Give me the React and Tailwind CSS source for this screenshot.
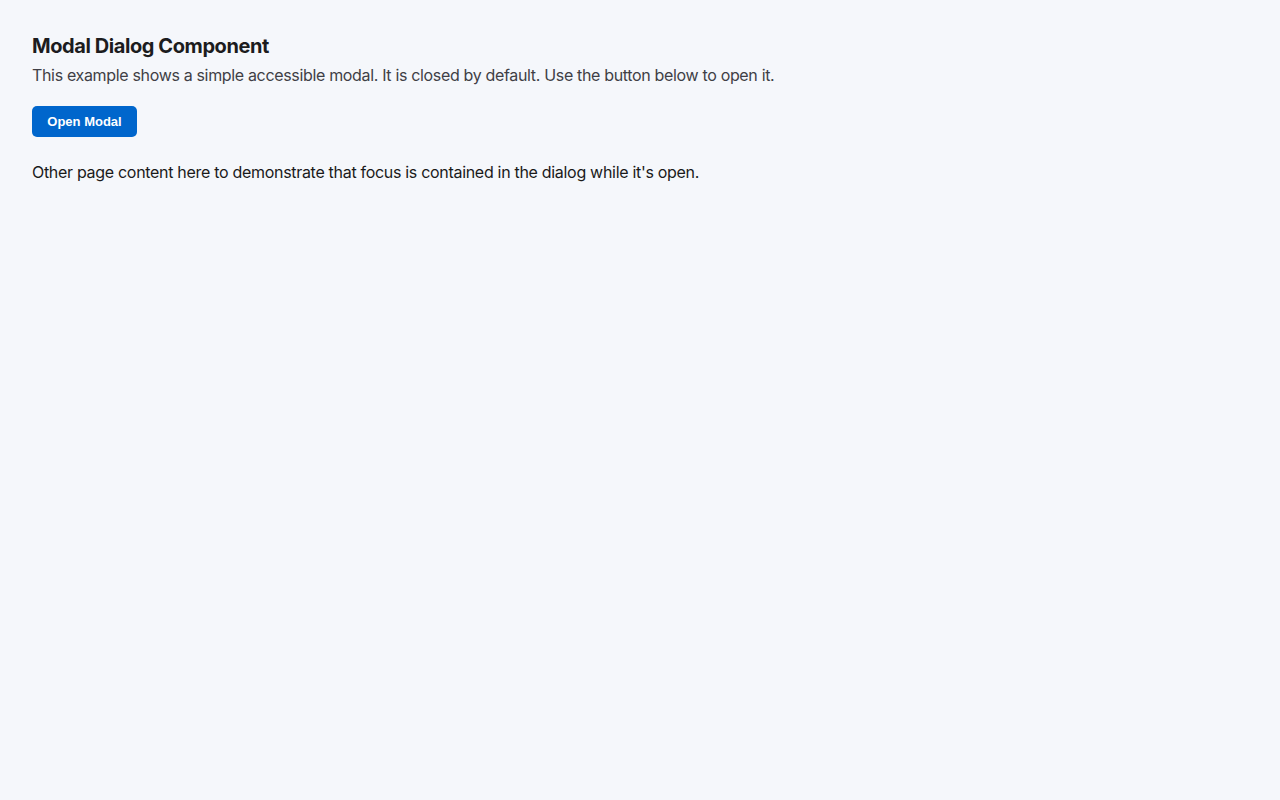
import { useState } from "react";

const App = () => {
  const [open, setOpen] = useState(false);

  return (
    <div className="min-h-screen bg-[#f5f7fb] px-8 pt-[33px] font-['Inter','Noto_Sans',sans-serif] text-[#1a1a1a]">
      <h1 className="text-[20px] font-bold leading-[26px] tracking-[-0.021em] text-[#1c1c1e]">
        Modal Dialog Component
      </h1>
      <p className="mt-[4px] text-[16px] leading-6 tracking-[-0.021em] text-[#3f3f46]">
        This example shows a simple accessible modal. It is closed by default.
        Use the button below to open it.
      </p>

      <button
        type="button"
        onClick={() => setOpen(true)}
        className="mt-[19px] h-[31px] w-[105px] rounded-[5px] bg-[#0066cc] font-['Liberation_Sans',Arial,sans-serif] text-[13px] font-bold text-white"
      >
        Open Modal
      </button>

      <p className="mt-[23px] text-[16px] leading-6 tracking-[-0.019em] text-[#1a1a1a]">
        Other page content here to demonstrate that focus is contained in the
        dialog while it's open.
      </p>

      {open ? (
        <div
          className="fixed inset-0 flex items-center justify-center bg-black/40"
          role="dialog"
          aria-modal="true"
        >
          <div className="w-[420px] rounded-lg bg-white p-6 shadow-xl">
            <h2 className="text-lg font-bold">Modal title</h2>
            <p className="mt-2 text-sm text-gray-600">Modal content.</p>
            <button
              type="button"
              onClick={() => setOpen(false)}
              className="mt-4 rounded-[5px] bg-[#0066cc] px-3 py-2 text-xs font-bold text-white"
            >
              Close
            </button>
          </div>
        </div>
      ) : null}
    </div>
  );
};

export default App;
